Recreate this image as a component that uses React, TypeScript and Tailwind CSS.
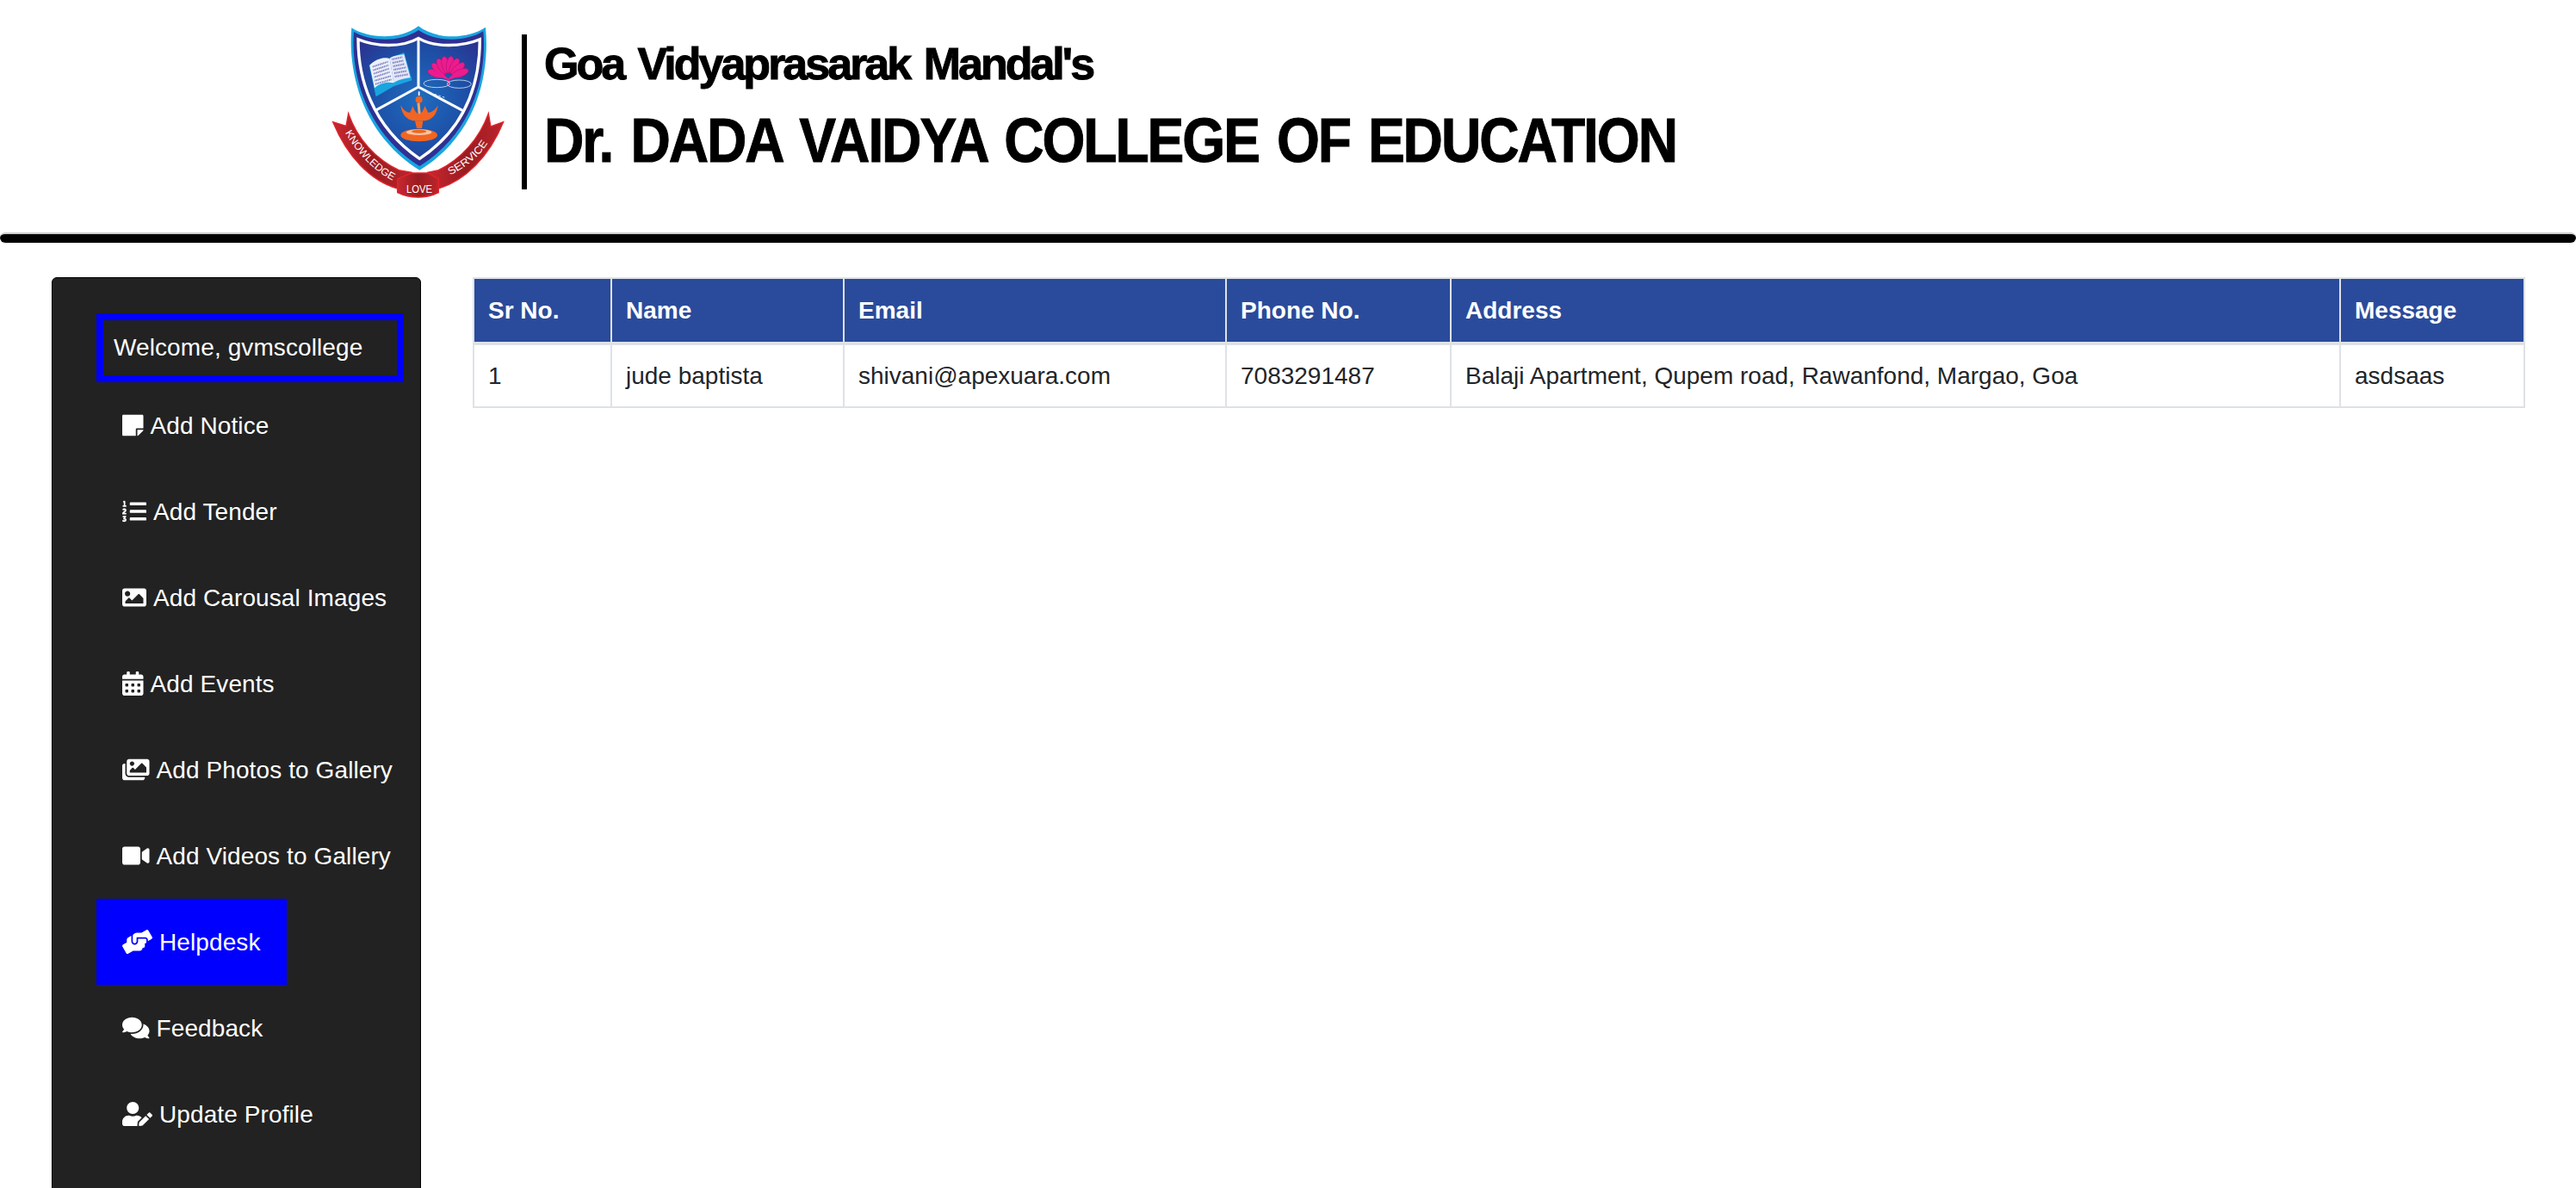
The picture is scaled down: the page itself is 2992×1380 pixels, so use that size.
import React from 'react';
import {
  FaStickyNote,
  FaListOl,
  FaImage,
  FaCalendarAlt,
  FaImages,
  FaVideo,
  FaHandsHelping,
  FaComments,
  FaUserEdit,
  FaPowerOff,
} from 'react-icons/fa';

const navItems = [
  { label: 'Add Notice', icon: FaStickyNote, iconWidth: 'w-[24.5px]' },
  { label: 'Add Tender', icon: FaListOl, iconWidth: 'w-[28px]' },
  { label: 'Add Carousal Images', icon: FaImage, iconWidth: 'w-[28px]' },
  { label: 'Add Events', icon: FaCalendarAlt, iconWidth: 'w-[24.5px]' },
  { label: 'Add Photos to Gallery', icon: FaImages, iconWidth: 'w-[31.5px]' },
  { label: 'Add Videos to Gallery', icon: FaVideo, iconWidth: 'w-[31.5px]' },
  { label: 'Helpdesk', icon: FaHandsHelping, iconWidth: 'w-[35px]', active: true },
  { label: 'Feedback', icon: FaComments, iconWidth: 'w-[31.5px]' },
  { label: 'Update Profile', icon: FaUserEdit, iconWidth: 'w-[35px]' },
  { label: '', icon: FaPowerOff, iconWidth: 'w-[28px]' },
];

const columns = [
  { title: 'Sr No.', width: 'w-[160px]' },
  { title: 'Name', width: 'w-[270px]' },
  { title: 'Email', width: 'w-[444px]' },
  { title: 'Phone No.', width: 'w-[261px]' },
  { title: 'Address', width: 'w-[1033px]' },
  { title: 'Message', width: 'w-[214px]' },
];

const row = [
  '1',
  'jude baptista',
  'shivani@apexuara.com',
  '7083291487',
  'Balaji Apartment, Qupem road, Rawanfond, Margao, Goa',
  'asdsaas',
];

const petals = [-72, -50, -30, -12, 8, 28, 48, 70];

// College crest, drawn on a 630 square
const Crest = () => (
  <svg viewBox="0 0 630 630" className="w-[210px] h-[210px] shrink-0">
    <defs>
      <radialGradient id="panel" cx="0.5" cy="0.5" r="0.65">
        <stop offset="0" stopColor="#1f6cc0" />
        <stop offset="0.6" stopColor="#1d4fa6" />
        <stop offset="1" stopColor="#2b3390" />
      </radialGradient>
      <linearGradient id="ribbon" x1="0" y1="0" x2="1" y2="0">
        <stop offset="0" stopColor="#c9272f" />
        <stop offset="0.5" stopColor="#9a1b21" />
        <stop offset="1" stopColor="#bb252b" />
      </linearGradient>
      <path id="knowledge" d="M62 388 C 105 460 165 525 240 560" />
      <path id="service" d="M428 535 C 480 510 535 470 566 412" />
    </defs>

    {/* ribbon */}
    <path
      d="M20 350 L66 364 L74 320 C 105 410 170 480 250 518 L295 526 L295 545 L245 552 L245 582 C 150 555 70 470 20 350 Z"
      fill="url(#ribbon)"
      stroke="#e2242c"
      strokeWidth="4"
    />
    <path
      d="M614 350 L570 366 L562 320 C 530 410 465 480 388 518 L350 526 L350 545 L388 552 L388 582 C 480 555 565 470 614 350 Z"
      fill="url(#ribbon)"
      stroke="#e2242c"
      strokeWidth="4"
    />
    <path
      d="M245 548 L295 528 L350 528 L388 548 L388 596 C 345 618 290 618 245 596 Z"
      fill="url(#ribbon)"
      stroke="#e2242c"
      strokeWidth="4"
    />
    <text fontFamily="Liberation Sans, sans-serif" fontSize="36" fill="#ffffff">
      <textPath href="#knowledge" textLength="238" lengthAdjust="spacingAndGlyphs">
        KNOWLEDGE
      </textPath>
    </text>
    <text fontFamily="Liberation Sans, sans-serif" fontSize="36" fill="#ffffff">
      <textPath href="#service" textLength="175" lengthAdjust="spacingAndGlyphs">
        SERVICE
      </textPath>
    </text>
    <text
      x="276"
      y="596"
      fontFamily="Liberation Sans, sans-serif"
      fontSize="36"
      fill="#ffffff"
      textLength="90"
      lengthAdjust="spacingAndGlyphs"
    >
      LOVE
    </text>

    {/* shield */}
    <path
      d="M85 22 C 140 58 250 68 318 16 C 386 68 495 58 552 20 C 566 170 530 390 322 518 C 118 390 72 170 85 22 Z"
      fill="#19a5e0"
    />
    <path
      d="M93 36 C 150 68 250 76 318 30 C 386 76 490 68 544 34 C 556 170 520 380 322 504 C 128 380 82 170 93 36 Z"
      fill="#2e3192"
    />
    <path
      d="M108 62 C 170 88 260 92 318 58 C 376 92 470 88 532 62 C 532 190 500 360 322 478 C 150 360 108 190 108 62 Z"
      fill="url(#panel)"
      stroke="#ffffff"
      strokeWidth="10"
    />
    <path d="M318 60 L318 228 M318 228 L168 310 M318 228 L472 310" stroke="#ffffff" strokeWidth="9" fill="none" />

    {/* book */}
    <path d="M146 152 L258 112 L268 108 L296 205 L232 226 L170 262 Z" fill="#19a5e0" />
    <path d="M148 152 C 170 128 205 122 218 130 L232 214 C 210 208 180 215 165 232 Z" fill="#eef0fa" />
    <path d="M218 130 C 225 118 250 118 268 114 L290 196 C 270 198 245 204 232 214 Z" fill="#e4e6f6" />
    <path
      d="M158 158 L212 140 M160 170 L214 152 M162 182 L216 164 M164 194 L218 176 M166 206 L222 190 M168 218 L224 202 M226 132 L262 124 M228 144 L266 136 M230 156 L270 148 M232 168 L274 160 M234 180 L278 172 M236 192 L282 184"
      stroke="#6d74bd"
      strokeWidth="6"
      strokeDasharray="3 2"
      fill="none"
    />

    {/* lotus */}
    {petals.map((angle) => (
      <ellipse
        key={angle}
        cx="422"
        cy="150"
        rx="13"
        ry="30"
        fill="#ec1c8e"
        stroke="#a5126a"
        strokeWidth="1.5"
        transform={`rotate(${angle} 422 195)`}
      />
    ))}
    <path d="M372 172 C 395 178 410 185 422 200 C 434 185 450 178 472 172 C 460 190 440 200 422 203 C 404 200 384 190 372 172 Z" fill="#ec1c8e" />
    <path d="M422 200 L422 220" stroke="#ec1c8e" strokeWidth="8" />
    <ellipse cx="382" cy="216" rx="46" ry="14" fill="none" stroke="#cfe3f5" strokeWidth="2.5" />
    <ellipse cx="460" cy="218" rx="42" ry="14" fill="none" stroke="#cfe3f5" strokeWidth="2.5" />
    <path d="M335 240 L410 265" stroke="#cfe3f5" strokeWidth="3" strokeDasharray="8 6" />

    {/* lamp */}
    <circle cx="320" cy="272" r="12" fill="#f26522" />
    <path d="M320 244 L320 258" stroke="#ffffff" strokeWidth="5" />
    <path d="M318 284 L322 325" stroke="#f7a46b" strokeWidth="9" />
    <path
      d="M256 292 C 260 325 278 342 300 346 L342 346 C 365 342 382 325 386 292 C 376 310 364 316 352 318 C 348 308 344 302 340 294 C 335 310 328 322 320 322 C 312 322 304 310 298 294 C 296 302 292 310 288 318 C 276 316 266 310 256 292 Z"
      fill="#f26522"
    />
    <path d="M306 346 L334 346 L330 372 L312 372 Z" fill="#f26522" />
    <ellipse cx="320" cy="396" rx="64" ry="22" fill="#f26522" />
    <ellipse cx="320" cy="386" rx="44" ry="10" fill="#f9c3a0" />
    <ellipse cx="320" cy="383" rx="26" ry="6" fill="#f26522" />
  </svg>
);

const App = () => {
  return (
    <div className="h-screen overflow-hidden bg-white font-['Liberation_Sans',sans-serif] text-[28px] text-[#212529]">
      <header className="h-[270px] pl-[380px] pt-[25px] flex items-start">
        <Crest />
        <div className="ml-4 mt-[15px] h-[180px] border-l-[6px] border-black pl-5 text-black font-bold [-webkit-text-stroke:1px_black]">
          <h2 className="mt-[4px] text-[52px] leading-[60px] tracking-[-3px] [word-spacing:5px]">Goa Vidyaprasarak Mandal's</h2>
          <h1 className="mt-[17px] text-[73px] leading-[84px] tracking-[-2.4px] [word-spacing:6px] whitespace-nowrap origin-left scale-x-[0.88]">
            Dr. DADA VAIDYA COLLEGE OF EDUCATION
          </h1>
        </div>
      </header>

      <hr className="h-[12px] border-0 border-t-2 border-[#cccccc] bg-black rounded-full" />

      <div className="flex pt-[40px] pl-[60px] pr-[61px] gap-[60px]">
        <aside className="w-[429px] shrink-0 h-[1200px] pt-[41px] pl-[51px] bg-[#222222] border border-black rounded-md text-white tracking-[0.1px]">
          <div className="w-[357px] h-[80px] flex items-center border-[8px] border-[#0000ff] pl-3">
            Welcome, gvmscollege
          </div>
          <nav className="flex flex-col items-start">
            {navItems.map((item) => {
              const Icon = item.icon;
              return (
                <a
                  key={item.label}
                  href="#"
                  className={
                    item.active
                      ? 'h-[100px] px-[30px] flex items-center gap-2 whitespace-nowrap bg-[#0000ff]'
                      : 'h-[100px] px-[30px] flex items-center gap-2 whitespace-nowrap'
                  }
                >
                  <Icon className={`h-[28px] ${item.iconWidth} shrink-0`} />
                  {item.label && <span className="pt-[1px]">{item.label}</span>}
                </a>
              );
            })}
          </nav>
        </aside>

        <main className="flex-1">
          <table className="w-full table-fixed border-collapse">
            <thead>
              <tr>
                {columns.map((col) => (
                  <th
                    key={col.title}
                    className={`${col.width} h-[76px] px-4 text-left font-bold text-white bg-[#2a4b9b] border-2 border-b-4 border-[#dee2e6]`}
                  >
                    {col.title}
                  </th>
                ))}
              </tr>
            </thead>
            <tbody>
              <tr>
                {row.map((cell) => (
                  <td key={cell} className="h-[74px] px-4 border-2 border-[#dee2e6]">
                    {cell}
                  </td>
                ))}
              </tr>
            </tbody>
          </table>
        </main>
      </div>
    </div>
  );
};

export default App;
